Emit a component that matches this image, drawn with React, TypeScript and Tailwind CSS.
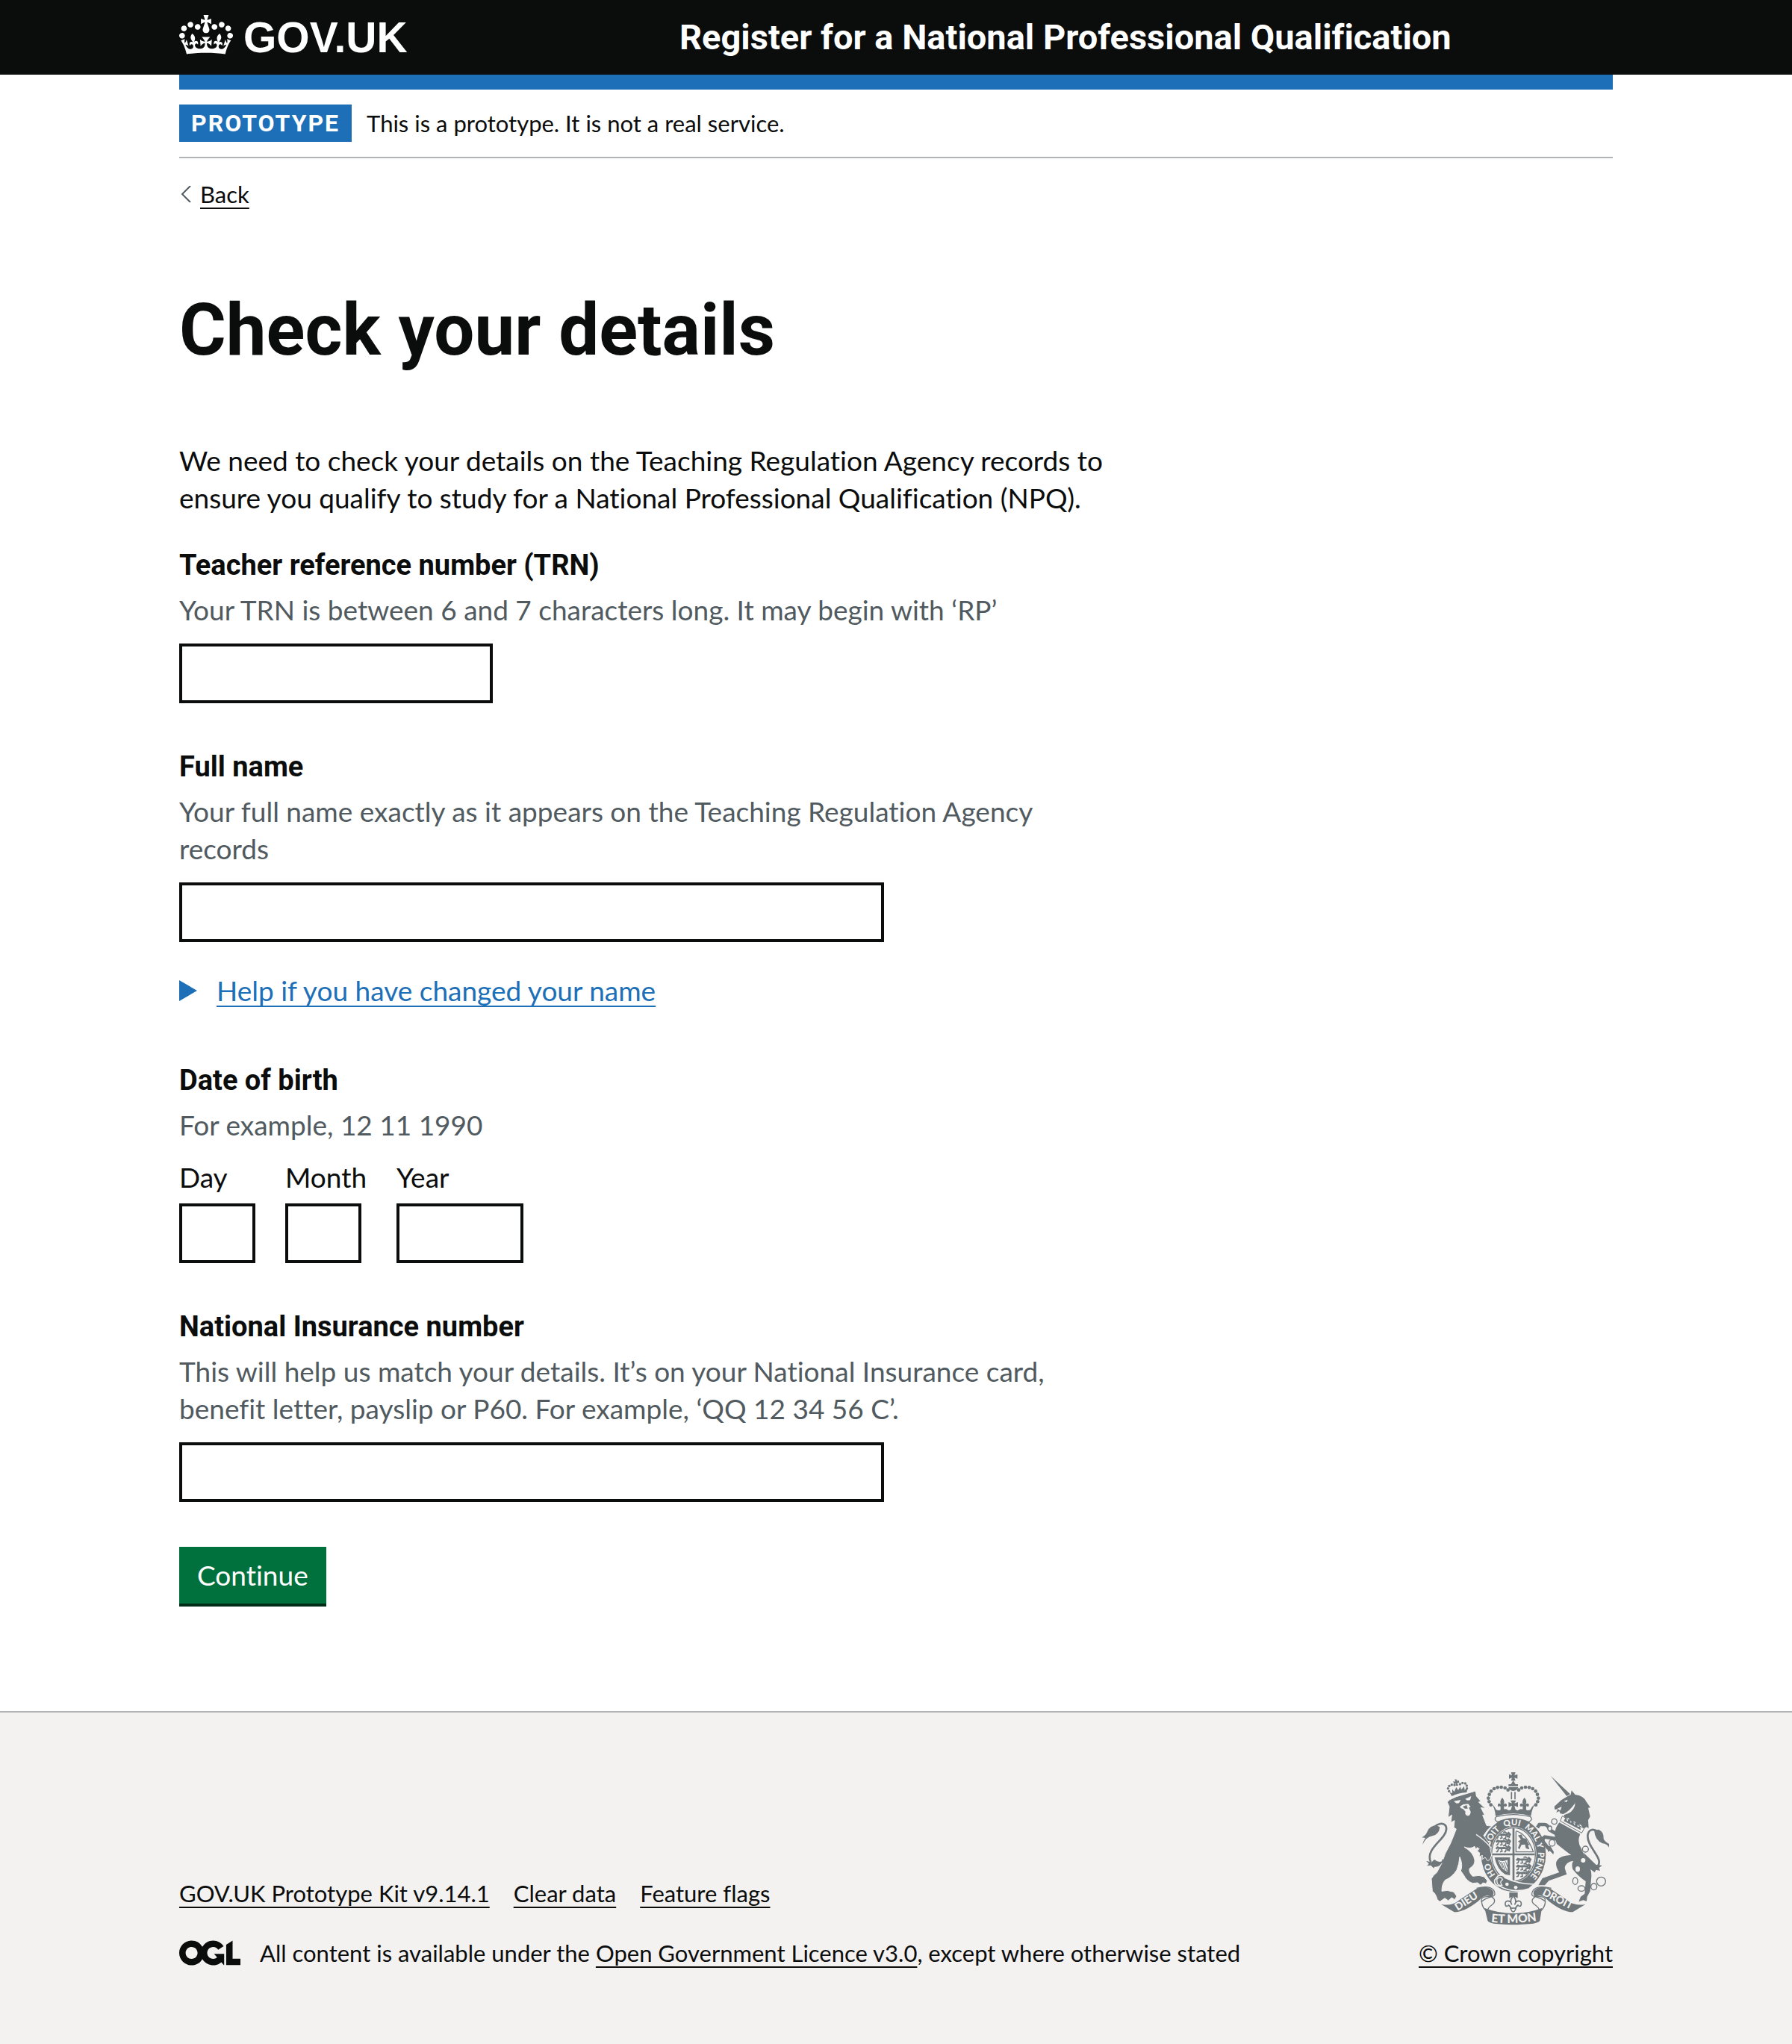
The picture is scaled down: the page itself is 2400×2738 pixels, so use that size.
import type { ReactNode } from "react";

const body = "font-['Lato','Liberation_Sans',sans-serif]";
const bold = "font-['Roboto','Liberation_Sans',sans-serif] font-bold";
const container = "mx-auto w-4/5 max-w-[1920px]";
const footerLink = "underline decoration-2 underline-offset-[6px] [text-decoration-skip-ink:none]";

function CrownLogo() {
  return (
    <svg viewBox="0 0 132 97" className="h-[53px] w-[72px] shrink-0" fill="currentColor" aria-hidden="true">
      <path
        fillRule="evenodd"
        d="M25 30.2c3.5 1.5 7.7-.2 9.1-3.7 1.5-3.6-.2-7.8-3.9-9.2-3.6-1.4-7.6.3-9.1 3.9-1.4 3.5.3 7.5 3.9 9zM9 39.5c3.6 1.5 7.8-.2 9.2-3.7 1.5-3.6-.2-7.8-3.9-9.1-3.6-1.5-7.6.2-9.1 3.8-1.4 3.5.3 7.5 3.8 9zM4.4 57.2c3.5 1.5 7.7-.2 9.1-3.8 1.5-3.6-.2-7.7-3.9-9.1-3.5-1.5-7.6.3-9.1 3.8-1.4 3.5.3 7.6 3.9 9.1zm38.3-21.4c3.5 1.5 7.7-.2 9.1-3.8 1.5-3.6-.2-7.7-3.9-9.1-3.6-1.5-7.6.3-9.1 3.8-1.3 3.6.4 7.7 3.9 9.1zm64.4-5.6c-3.6 1.5-7.8-.2-9.1-3.7-1.5-3.6.2-7.8 3.8-9.2 3.6-1.4 7.7.3 9.2 3.9 1.3 3.5-.4 7.5-3.9 9zm15.9 9.3c-3.6 1.5-7.7-.2-9.1-3.7-1.5-3.6.2-7.8 3.7-9.1 3.6-1.5 7.7.2 9.2 3.8 1.5 3.5-.3 7.5-3.8 9zm4.7 17.7c-3.6 1.5-7.8-.2-9.2-3.8-1.5-3.6.2-7.7 3.9-9.1 3.6-1.5 7.7.3 9.2 3.8 1.3 3.5-.4 7.6-3.9 9.1zM89.3 35.8c-3.6 1.5-7.8-.2-9.2-3.8-1.4-3.6.2-7.7 3.9-9.1 3.6-1.5 7.7.3 9.2 3.8 1.4 3.6-.3 7.7-3.9 9.1zM69.7 17.7l8.9 4.7V9.3l-8.9 2.8c-.2-.3-.5-.6-.9-.9L72.4 0H59.6l3.5 11.2c-.3.3-.6.5-.9.9l-8.8-2.8v13.1l8.8-4.7c.3.3.6.7.9.9l-5 15.4v.1c-.2.8-.4 1.6-.4 2.4 0 4.1 3.1 7.5 7 8.1h.2c.3 0 .7.1 1 .1.4 0 .7 0 1-.1h.2c4-.6 7.1-4.1 7.1-8.1 0-.8-.1-1.7-.4-2.4V34l-5.1-15.4c.4-.2.7-.6 1-.9zM66 92.8c16.9 0 32.8 1.1 47.1 3.2 4-16.9 8.9-26.7 14-33.5l-9.6-3.4c1 4.9 1.1 7.2 0 10.2-1.5-1.4-3-4.3-4.2-8.7L108.6 76c2.8-2 5-3.2 7.5-3.3-4.4 9.4-10 11.9-13.6 11.2-4.3-.8-6.3-4.6-5.6-7.9 1-4.7 5.7-5.9 8-.5 4.3-8.7-3-11.4-7.6-8.8 7.1-7.2 7.9-13.5 2.1-21.1-8 6.1-8.1 12.3-4.5 20.8-4.7-5.4-12.1-2.5-9.5 6.2 3.4-5.2 7.9-2 7.2 3.1-.6 4.3-6.4 7.8-13.5 7.2-10.3-.9-10.9-8-11.2-13.8 2.5-.5 7.1 1.8 11 7.3L80.2 60c-4.1 4.4-8 5.3-12.3 5.4 1.4-4.4 8-11.6 8-11.6H55.5s6.4 7.2 7.9 11.6c-4.2-.1-8-1-12.3-5.4l1.4 16.4c3.9-5.5 8.5-7.7 10.9-7.3-.3 5.8-.9 12.8-11.1 13.8-7.2.6-12.9-2.9-13.5-7.2-.7-5 3.8-8.3 7.1-3.1 2.7-8.7-4.6-11.6-9.4-6.2 3.7-8.5 3.6-14.7-4.6-20.8-5.8 7.6-5 13.9 2.2 21.1-4.7-2.6-11.9.1-7.7 8.8 2.3-5.5 7.1-4.2 8.1.5.7 3.3-1.3 7.1-5.7 7.9-3.5.7-9-1.8-13.5-11.2 2.5.1 4.7 1.3 7.5 3.3l-4.7-15.4c-1.2 4.4-2.7 7.2-4.3 8.7-1.1-3-.9-5.3 0-10.2l-9.5 3.4c5 6.9 9.9 16.7 14 33.5 14.8-2.1 30.8-3.2 47.7-3.2z"
      />
    </svg>
  );
}

function OglLogo() {
  return (
    <svg viewBox="0 0 483.2 195.7" className="h-[34px] w-[82px] shrink-0" fill="currentColor" aria-hidden="true">
      <path d="M421.5 142.8V.1l-50.7 32.3v161.1h112.4v-50.7zm-122.3-9.6A47.12 47.12 0 0 1 221 97.8c0-26 21.1-47.1 47.1-47.1 16.7 0 31.4 8.7 39.7 21.8l42.7-27.2A97.63 97.63 0 0 0 268.1 0c-36.5 0-68.3 20.1-85.1 49.7A98 98 0 0 0 97.8 0C43.9 0 0 43.9 0 97.8s43.9 97.8 97.8 97.8c36.5 0 68.3-20.1 85.1-49.7a97.76 97.76 0 0 0 149.6 25.4l19.4 22.2h3v-87.8h-80l24.3 27.5zM97.8 145c-26 0-47.1-21.1-47.1-47.1s21.1-47.1 47.1-47.1 47.1 21.1 47.1 47.1S123.8 145 97.8 145" />
    </svg>
  );
}

const INK = "#6f777b";
const PAPER = "#f3f2f1";

const beads: [number, number][] = [
  [416, 143], [404, 135], [389, 132], [374, 133], [360, 138], [348, 148], [341, 161], [337, 176], [340, 190], [347, 203],
];
const lionBeads: [number, number][] = [
  [119, 88], [115, 77], [120, 67], [130, 62], [141, 63], [163, 60], [173, 55], [184, 57], [190, 66], [191, 77],
];

function FleurDeLis({ x, y }: { x: number; y: number }) {
  return (
    <path
      transform={`translate(${x} ${y})`}
      d="M0 -24 C10 -12 9 -4 4 6 C8 -4 20 -2 18 8 C16 14 10 12 10 8 C6 12 6 18 8 26 H-8 C-6 18 -6 12 -10 8 C-10 12 -16 14 -18 8 C-20 -2 -8 -4 -4 6 C-9 -4 -10 -12 0 -24Z"
    />
  );
}

function PassantLions({ x, y }: { x: number; y: number }) {
  return (
    <g transform={`translate(${x} ${y})`} fill="none" stroke={INK} strokeWidth="5">
      {[0, 27, 54].map((dy) => (
        <g key={dy} transform={`translate(0 ${dy})`}>
          <path d="M2 8 L8 2 L16 5 L34 4 L46 6 L52 -2 L58 4 L54 12 L44 12" strokeWidth="8" />
          <path d="M12 8 L8 18 L2 20 M24 8 L26 18 L18 20 M42 10 L40 19 L34 20 M52 10 L56 18 M46 0 L38 -6 L30 -4" strokeWidth="5" />
        </g>
      ))}
    </g>
  );
}

function RoyalArms() {
  return (
    <svg
      viewBox="72 72 750 612"
      className="h-[204px] w-[250px] overflow-visible"
      fill={INK}
      role="img"
      aria-label="Royal coat of arms"
    >
      <defs>
        <path id="motto" d="M438 521 A99 118 0 0 1 339 403 A99 118 0 0 1 438 285 A99 118 0 0 1 537 403 A99 118 0 0 1 438 521" />
        <path id="scroll" d="M348 674 Q437 684 544 667" />
        <clipPath id="shield">
          <ellipse cx="438" cy="402" rx="86" ry="105" />
        </clipPath>
      </defs>

      {/* garter and shield */}
      <ellipse cx="438" cy="403" rx="130" ry="149" />
      <ellipse cx="438" cy="402" rx="92" ry="111" fill={PAPER} />
      <g clipPath="url(#shield)">
        <PassantLions x={366} y={318} />
        <PassantLions x={448} y={418} />
        <path d="M352 402 H524 M438 290 V512" stroke={INK} strokeWidth="8" />
        <path d="M448 310 V392 H518" fill="none" stroke={INK} strokeWidth="4" />
        <path d="M448 308 Q490 318 518 392" fill="none" stroke={INK} strokeWidth="4" />
        <path d="M456 326 L470 322 L476 336 L490 340 L494 352 L504 366 L496 364 L502 382 L488 378 L484 362 L470 364 L462 382 L456 376 L464 356 L456 350 L468 342Z" />
        <path d="M362 414 L424 414 L424 486 L404 482 Q372 462 362 414Z" />
        <path d="M376 424 Q392 434 414 424 V472 Q386 462 376 424Z" fill={PAPER} />
        <path d="M382 430 L396 456 M390 432 L404 466 M398 432 L412 468 M406 430 L414 452" stroke={INK} strokeWidth="3" />
      </g>
      <ellipse cx="438" cy="402" rx="88" ry="107" fill="none" stroke={INK} strokeWidth="4" />
      <g fill={PAPER} className="font-['Lato','Liberation_Sans',sans-serif] text-[34px] font-black">
        <text><textPath href="#motto" startOffset="84">HO</textPath></text>
        <text><textPath href="#motto" startOffset="207">SOIT</textPath></text>
        <text><textPath href="#motto" startOffset="304">QUI</textPath></text>
        <text><textPath href="#motto" startOffset="386">MAL</textPath></text>
        <text><textPath href="#motto" startOffset="466">Y</textPath></text>
        <text><textPath href="#motto" startOffset="502">PENSE</textPath></text>
      </g>
      {/* buckle */}
      <path d="M376 488 Q396 480 404 496 Q450 520 520 522 L500 540 Q440 560 384 530 Q360 528 362 506Z" stroke={PAPER} strokeWidth="5" />
      <path d="M372 500 Q390 488 394 504 Q380 512 392 526 Q368 530 372 500Z" fill="none" stroke={PAPER} strokeWidth="4" />
      <circle cx="412" cy="522" r="7" fill={PAPER} />
      <circle cx="447" cy="535" r="7" fill={PAPER} />

      {/* crown */}
      <path d="M428 72 H446 L442 84 L454 80 V98 L442 94 L446 106 H428 L432 94 L420 98 V80 L432 84Z" />
      <path d="M437 104 L446 120 H456 V128 H418 V120 H428Z" />
      <path d="M418 132 H457 Q454 146 437 147 Q420 146 418 132Z" />
      <path d="M430 151 V181 M444 151 V181" stroke={INK} strokeWidth="5" />
      {beads.map(([x, y]) => (
        <g key={x}>
          <circle cx={x} cy={y} r="7" />
          <circle cx={875 - x} cy={y} r="7" />
        </g>
      ))}
      <path d="M352 200 Q362 208 368 222 Q376 228 390 222 L408 220 L420 226 L437 218 L454 226 L466 220 L484 222 Q498 228 506 222 Q512 208 524 200 Q512 220 508 248 Q437 228 366 248 Q364 220 352 200Z" />
      <FleurDeLis x={393} y={198} />
      <FleurDeLis x={482} y={198} />
      <path d="M426 185 H448 L442 197 L456 192 V212 L442 206 L446 222 H428 L432 206 L418 212 V192 L432 197Z" />
      <path d="M370 250 Q437 234 505 250 Q518 262 500 272 Q437 244 374 272 Q356 262 370 250Z" fill={PAPER} stroke={INK} strokeWidth="4" />

      {/* lion */}
      <g transform="translate(60 60)">
        <path
          stroke={PAPER}
          strokeWidth="3"
          d="M112 132 L122 122 L148 110 L226 87 L229 108 L247 129 L238 132 L265 158 L247 154 L263 186 L254 184 L270 226 L290 228 Q272 242 258 266 L280 296 L290 345 L284 362 L274 368 L264 354 L252 362 L253 346 L240 352 L242 336 L232 328 L240 320 L234 314 L226 320 L222 310 Q205 322 180 312 Q218 335 222 365 Q224 385 202 398 Q196 412 214 430 L240 427 L260 432 L273 448 L268 460 L256 456 L246 466 L234 456 L214 458 Q190 450 178 425 L166 408 Q176 385 162 352 Q160 380 150 405 Q130 435 104 445 Q90 460 90 490 L112 487 L138 493 L150 510 L142 524 L130 516 L116 528 L102 518 L82 532 L72 524 Q66 500 52 490 L48 440 Q55 425 70 415 Q80 395 90 378 Q100 340 124 300 Q140 262 148 240 L138 234 L141 206 L126 214 L130 184 L115 194 L120 150Z"
        />
        <path d="M228 262 Q262 284 288 316" fill="none" stroke={PAPER} strokeWidth="4" />
        <path fill={PAPER} d="M138 128 L166 123 L159 136 L149 137Z M184 119 L208 108 L204 124 L192 125Z M163 149 L176 141 L196 139 L206 152 L198 154 L206 170 Q205 188 193 187 Q181 183 185 170 L176 160 L166 156Z" />
        <path d="M174 150 L190 144 L194 158 L182 158Z" />
        <path d="M60 232 C92 202 126 226 98 266 C80 294 24 330 46 374" fill="none" stroke={INK} strokeWidth="8" />
        <path d="M12 304 Q16 286 24 276 L10 274 Q26 266 32 250 Q42 226 68 226 L82 232 Q80 262 52 268 Q26 272 12 304Z" />
        <path d="M28 368 L48 374 L60 362 Q76 378 94 368 Q84 394 60 392 L58 398 L46 386 L30 388 L38 380Z" />
        <path d="M90 376 L96 362" stroke={INK} strokeWidth="6" />
        {lionBeads.map(([x, y]) => (
          <circle key={`${x}-${y}`} cx={x} cy={y} r="5" />
        ))}
        <path d="M142 40 L152 42 L150 48 L158 44 L160 54 L152 54 L156 66 H146 L146 56 L138 58 L136 48 L144 50Z" />
        <path d="M121 92 L132 96 L132 80 L140 90 L148 72 L156 84 L164 70 L168 82 L180 68 L181 82 L193 78 L190 93 Q158 94 130 108Z" />
      </g>

      {/* unicorn */}
      <g transform="translate(480 60)">
        <path d="M107 26 L186 100 L172 108Z" />
        <path d="M122 150 L150 124 L176 108 L188 102 L191 85 L206 102 Q240 106 250 130 L267 154 L258 155 L266 190 L258 204 L260 236 L250 232 L240 240 L228 222 L214 226 L204 210 L190 212 L180 196 L164 196 L160 184 Q196 176 204 148 L206 136 Q180 172 158 180 L146 178 L142 168 L130 174 L136 160 L124 162Z" />
        <path d="M160 128 L176 122 L172 132Z M134 158 L152 150 L146 166Z" fill={PAPER} />
        <path d="M154 188 L242 238 L232 256 L146 208Z" fill={PAPER} stroke={INK} strokeWidth="3" />
        <path d="M162 204 L168 192 L174 210 L182 198 L188 216 L196 206 L202 224 L212 214 L216 232 L226 228 L228 244 L160 208Z" />
        <path d="M142 214 L226 260 Q212 290 230 318 L254 372 Q272 400 271 430 L266 490 L254 512 L252 530 L238 526 L220 532 L228 512 L244 500 L248 450 Q220 432 196 402 Q190 382 198 368 Q168 372 164 396 Q168 412 172 422 L100 448 L84 466 L58 466 L74 438 L142 414 Q126 392 130 372 Q140 346 190 345 Q166 328 132 300 Q112 250 142 214Z" />
        <path d="M134 262 L104 244 Q96 222 82 222 H62 L54 234" fill="none" stroke={INK} strokeWidth="14" />
        <path d="M134 280 L84 272 Q72 278 78 292 L98 318" fill="none" stroke={INK} strokeWidth="14" />
        <path d="M90 312 L106 308 L120 332 L118 342 L104 328 L98 332Z" />
        <path d="M288 396 C334 366 254 318 256 268 C258 240 280 236 298 252" fill="none" stroke={INK} strokeWidth="8" />
        <path d="M282 246 L300 242 Q322 252 320 280 Q326 292 342 300 V314 Q334 300 316 298 Q286 286 282 246Z" />
        <path d="M238 334 L290 384 L314 386 L302 396 L306 408 L290 404 L284 414 L262 398Z" />
        <circle cx="238" cy="366" r="9" fill={PAPER} />
        <ellipse cx="216" cy="401" rx="9" ry="11" fill={PAPER} />
        <g fill={PAPER} stroke={INK} strokeWidth="4">
          <circle cx="122" cy="210" r="11" />
          <ellipse cx="104" cy="238" rx="8" ry="10" />
          <ellipse cx="113" cy="296" rx="12" ry="13" />
          <circle cx="247" cy="321" r="12" />
          <ellipse cx="206" cy="449" rx="10" ry="14" />
          <ellipse cx="231" cy="479" rx="14" ry="11" />
          <ellipse cx="281" cy="472" rx="12" ry="13" />
          <circle cx="310" cy="451" r="18" />
        </g>
      </g>

      {/* scroll */}
      <path d="M312 598 Q300 570 335 572 Q375 575 358 545 Q340 525 290 538 M560 598 Q576 570 540 572 Q498 575 518 545 Q536 525 590 538" fill="none" stroke={INK} strokeWidth="4" />
      <path d="M310 592 Q322 580 350 572 Q374 588 350 606 Q330 620 336 634 Q312 620 310 592Z M566 592 Q554 580 526 572 Q500 588 526 606 Q546 620 540 634 Q564 620 566 592Z" fill={PAPER} stroke={INK} strokeWidth="4" />
      <path d="M147 602 Q190 612 222 584 L290 540 Q330 524 354 546 Q364 560 350 574 Q324 556 296 590 Q240 634 200 634Z" />
      <path d="M728 602 Q686 612 652 584 L586 540 Q546 524 522 546 Q512 560 526 574 Q552 556 580 590 Q636 634 676 634Z" />
      <path d="M322 618 Q437 660 552 618 L544 668 Q540 678 500 682 Q437 688 376 682 Q336 678 334 668Z" />
      <g fill={PAPER} className="font-['Lato','Liberation_Sans',sans-serif] text-[42px] font-black">
        <text transform="translate(214 629) rotate(-33)">DIEU</text>
        <text transform="translate(551 564) rotate(27)">DROIT</text>
        <text className="text-[47px]"><textPath href="#scroll">ET MON</textPath></text>
      </g>
      <path d="M421 555 H455 V578 Q437 566 421 578Z" />
      <path
        d="M437 568 C450 584 448 596 443 604 C448 584 472 584 469 604 C467 614 458 610 456 606 C450 610 446 616 446 624 Q437 642 428 624 C428 616 424 610 418 606 C416 610 407 614 405 604 C402 584 426 584 431 604 C426 596 424 584 437 568Z"
        fill={PAPER}
        stroke={INK}
        strokeWidth="5"
      />
      <path d="M424 618 H450" stroke={INK} strokeWidth="5" />
    </svg>
  );
}

function Field({ id, label, hint, width }: { id: string; label: string; hint: string; width: string }) {
  return (
    <div>
      <label htmlFor={id} className={`${bold} block text-[38px] leading-[50px]`}>
        {label}
      </label>
      <p id={`${id}-hint`} className="mt-2.5 mb-5 text-[#505a5f]">
        {hint}
      </p>
      <input
        id={id}
        name={id}
        type="text"
        aria-describedby={`${id}-hint`}
        className={`${width} block h-20 max-w-full rounded-none border-4 border-[#0b0c0c] bg-white px-2`}
      />
    </div>
  );
}

function DatePart({ id, label, width }: { id: string; label: string; width: string }) {
  return (
    <div>
      <label htmlFor={id} className="mb-2.5 block">
        {label}
      </label>
      <input
        id={id}
        name={id}
        type="text"
        inputMode="numeric"
        className={`${width} block h-20 rounded-none border-4 border-[#0b0c0c] bg-white px-2`}
      />
    </div>
  );
}

function FooterLink({ children }: { children: ReactNode }) {
  return (
    <a href="#" className={footerLink}>
      {children}
    </a>
  );
}

export default function App() {
  return (
    <div className={`${body} bg-white text-[37px] leading-[50px] text-[#0b0c0c] [font-variant-ligatures:none]`}>
      <header className="bg-[#0b0c0c] text-white">
        <div className={`${container} flex h-[100px] items-center`}>
          <div className="w-1/3">
            <a href="#" className="flex items-start gap-3.5">
              <CrownLogo />
              <span className="font-['Liberation_Sans',sans-serif] text-[57px] leading-[60px] font-bold">GOV.UK</span>
            </a>
          </div>
          <a href="#" className={`${bold} pl-[30px] text-[47px] leading-[60px]`}>
            Register for a National Professional Qualification
          </a>
        </div>
      </header>

      <div className={container}>
        <div className="h-5 bg-[#1d70b8]" />
        <div className="flex items-center gap-5 border-b-2 border-[#b1b4b6] py-5 text-[31px] leading-10">
          <strong className={`${bold} bg-[#1d70b8] px-4 text-[32px] leading-[50px] tracking-[2px] text-white uppercase`}>
            Prototype
          </strong>
          <span>This is a prototype. It is not a real service.</span>
        </div>
        <a href="#" className="mt-7 inline-flex items-center gap-3 text-[31px] leading-10">
          <svg viewBox="0 0 16 22" className="h-[22px] w-4" fill="none" stroke="#505a5f" strokeWidth="2" aria-hidden="true">
            <path d="M15 0 L4 11 L15 22" />
          </svg>
          <span className={footerLink}>Back</span>
        </a>

        <main className="mt-[110px] w-2/3 pr-5">
          <h1 className={`${bold} text-[96px] leading-[100px]`}>Check your details</h1>
          <p className="mt-[100px] mb-10">
            We need to check your details on the Teaching Regulation Agency records to ensure you qualify to study for a
            National Professional Qualification (NPQ).
          </p>

          <form>
            <Field
              id="trn"
              label="Teacher reference number (TRN)"
              hint="Your TRN is between 6 and 7 characters long. It may begin with ‘RP’"
              width="w-[420px]"
            />
            <div className="mt-[60px]">
              <Field
                id="full-name"
                label="Full name"
                hint="Your full name exactly as it appears on the Teaching Regulation Agency records"
                width="w-[944px]"
              />
            </div>
            <details className="mt-10">
              <summary className="flex w-fit cursor-pointer list-none items-center gap-[26px] text-[#1d70b8]">
                <svg viewBox="0 0 24 28" className="h-7 w-6" fill="currentColor" aria-hidden="true">
                  <path d="M0 0 L24 14 L0 28Z" />
                </svg>
                <span className={footerLink}>Help if you have changed your name</span>
              </summary>
            </details>

            <fieldset className="mt-[70px]" aria-describedby="dob-hint">
              <legend className={`${bold} text-[38px] leading-[50px]`}>Date of birth</legend>
              <p id="dob-hint" className="mt-2.5 mb-5 text-[#505a5f]">
                For example, 12 11 1990
              </p>
              <div className="flex gap-10">
                <DatePart id="dob-day" label="Day" width="w-[102px]" />
                <DatePart id="dob-month" label="Month" width="w-[102px]" />
                <DatePart id="dob-year" label="Year" width="w-[170px]" />
              </div>
            </fieldset>

            <div className="mt-[60px]">
              <Field
                id="nino"
                label="National Insurance number"
                hint="This will help us match your details. It’s on your National Insurance card, benefit letter, payslip or P60. For example, ‘QQ 12 34 56 C’."
                width="w-[944px]"
              />
            </div>
            <button
              type="button"
              className="mt-[60px] block h-20 border-b-4 border-[#002d18] bg-[#00703c] px-6 text-white"
            >
              Continue
            </button>
          </form>
        </main>
      </div>

      <footer className="mt-[140px] border-t-2 border-[#b1b4b6] bg-[#f3f2f1] pt-20 pb-[102px] text-[31px] leading-10">
        <div className={`${container} flex items-end justify-between gap-10`}>
          <div className="flex flex-col gap-10">
            <nav className="flex gap-8" aria-label="Support links">
              <FooterLink>GOV.UK Prototype Kit v9.14.1</FooterLink>
              <FooterLink>Clear data</FooterLink>
              <FooterLink>Feature flags</FooterLink>
            </nav>
            <div className="flex items-center gap-[26px]">
              <OglLogo />
              <span>
                All content is available under the <FooterLink>Open Government Licence v3.0</FooterLink>, except where
                otherwise stated
              </span>
            </div>
          </div>
          <div className="flex flex-col items-center gap-[18px]">
            <RoyalArms />
            <FooterLink>© Crown copyright</FooterLink>
          </div>
        </div>
      </footer>
    </div>
  );
}
